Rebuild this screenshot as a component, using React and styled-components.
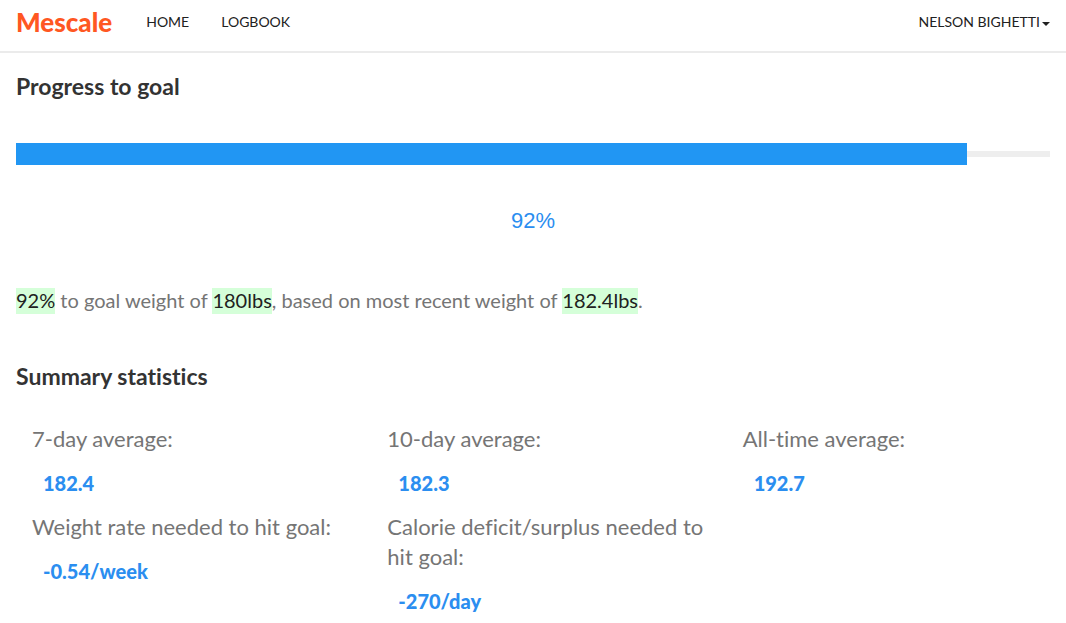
import React from "react";
import styled, { createGlobalStyle } from "styled-components";

const GlobalStyle = createGlobalStyle`
  * {
    box-sizing: border-box;
  }
  body {
    margin: 0;
    background: #fff;
    color: #757575;
    font-family: Lato, "Liberation Sans", sans-serif;
    font-size: 20px;
    line-height: 30px;
    font-variant-ligatures: none;
  }
`;

const Header = styled.header`
  display: flex;
  align-items: center;
  min-height: 53px;
  padding: 0 16px 7px;
  border-bottom: 2px solid #ebebeb;
`;

const Brand = styled.a`
  margin-right: 34px;
  color: #ff5722;
  font-size: 26px;
  font-weight: 900;
  text-decoration: none;
`;

const Nav = styled.nav`
  display: flex;
  flex: 1;
  gap: 32px;
`;

const NavLink = styled.a`
  color: #212121;
  font-size: 14px;
  text-decoration: none;
  text-transform: uppercase;
`;

const UserButton = styled.button`
  display: flex;
  align-items: center;
  gap: 2px;
  padding: 0;
  border: 0;
  background: none;
  color: #212121;
  font: inherit;
  font-size: 14px;
  text-transform: uppercase;
  cursor: pointer;
`;

const Caret = styled.span`
  margin-top: 3px;
  border: 4px solid transparent;
  border-top-color: #212121;
  border-bottom: 0;
`;

const Section = styled.section`
  padding: 0 16px;
`;

const Heading = styled.h2`
  margin: 0;
  padding: 18px 0 21px;
  color: #333;
  font-size: 23px;
  font-weight: 700;
  line-height: 30px;
`;

const Track = styled.div`
  display: flex;
  align-items: center;
  height: 22px;
  margin-top: 21px;
  background: linear-gradient(#eee, #eee) center / 100% 6px no-repeat;
`;

const Fill = styled.div`
  height: 100%;
  background: #2196f3;
`;

const Percent = styled.p`
  margin: 41px 0 49px;
  color: #2b8ef0;
  font-family: "Liberation Sans", sans-serif;
  font-size: 22px;
  text-align: center;
`;

const Summary = styled.p`
  margin: 0 0 28px;
`;

const Highlight = styled.mark`
  padding: 0 0 2px;
  background: #d5ffd9;
  color: #212121;
`;

const Stats = styled.dl`
  display: grid;
  grid-template-columns: repeat(3, 1fr);
  margin: 12px 0 0;
`;

const Stat = styled.div`
  padding: 0 0 0 32px;
`;

const Label = styled.dt`
  font-size: 22px;
`;

const Value = styled.dd`
  margin: 0;
  padding: 14px 11px;
  color: #2b8ef0;
  font-weight: 900;
`;

const stats = [
  ["7-day average:", "182.4"],
  ["10-day average:", "182.3"],
  ["All-time average:", "192.7"],
  ["Weight rate needed to hit goal:", "-0.54/week"],
  ["Calorie deficit/surplus needed to hit goal:", "-270/day"],
];

export default function App() {
  const progress = 92;
  return (
    <>
      <GlobalStyle />
      <Header>
        <Brand href="#">Mescale</Brand>
        <Nav>
          <NavLink href="#home">Home</NavLink>
          <NavLink href="#logbook">Logbook</NavLink>
        </Nav>
        <UserButton type="button" aria-haspopup="menu">
          Nelson Bighetti
          <Caret />
        </UserButton>
      </Header>
      <main>
        <Section>
          <Heading>Progress to goal</Heading>
          <Track
            role="progressbar"
            aria-label="Progress to goal"
            aria-valuenow={progress}
            aria-valuemin={0}
            aria-valuemax={100}
          >
            <Fill style={{ width: `${progress}%` }} />
          </Track>
          <Percent>{progress}%</Percent>
          <Summary>
            <Highlight>{progress}%</Highlight> to goal weight of{" "}
            <Highlight>180lbs</Highlight>, based on most recent weight of{" "}
            <Highlight>182.4lbs</Highlight>.
          </Summary>
          <Heading>Summary statistics</Heading>
        </Section>
        <Stats>
          {stats.map(([label, value]) => (
            <Stat key={label}>
              <Label>{label}</Label>
              <Value>{value}</Value>
            </Stat>
          ))}
        </Stats>
      </main>
    </>
  );
}
